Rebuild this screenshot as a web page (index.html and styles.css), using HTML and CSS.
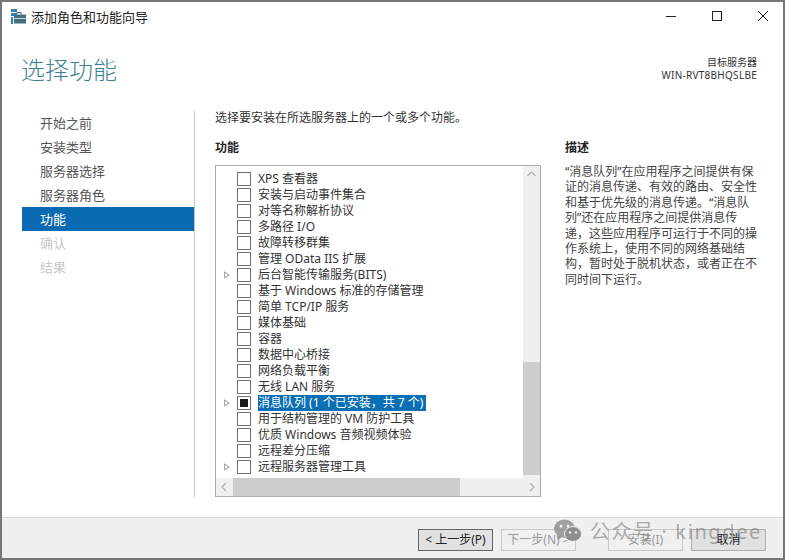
FILE: index.html
```html
<!DOCTYPE html>
<html lang="zh">
<head>
  <meta charset="utf-8">
  <title>添加角色和功能向导</title>
  <link rel="stylesheet" href="styles.css">
</head>
<body>
<div class="window">
  <header class="titlebar">
    <svg class="app-icon" width="15" height="15" viewBox="0 0 15 15">
      <rect x="0" y="0" width="6" height="3" fill="#2f86b8"/>
      <rect x="0" y="4" width="6" height="3" fill="#2f86b8"/>
      <rect x="0" y="8" width="2" height="7" fill="#2f86b8"/>
      <path d="M6 5V3.5h4V5" fill="none" stroke="#46626e" stroke-width="1"/>
      <rect x="3" y="5.5" width="12" height="9" fill="#46707f"/>
      <rect x="3" y="9" width="12" height="1" fill="#c9d8de"/>
    </svg>
    <span class="title-text">添加角色和功能向导</span>
    <div class="window-btns">
      <svg width="12" height="12" viewBox="0 0 12 12"><path d="M1 6.5h10" stroke="#222" stroke-width="1"/></svg>
      <svg width="12" height="12" viewBox="0 0 12 12"><rect x="1.5" y="1.5" width="9" height="9" fill="none" stroke="#222"/></svg>
      <svg width="12" height="12" viewBox="0 0 12 12"><path d="M1 1l10 10M11 1L1 11" stroke="#222" stroke-width="1"/></svg>
    </div>
  </header>

  <div class="page-head">
    <h1>选择功能</h1>
    <div class="server">
      <div>目标服务器</div>
      <div class="server-name">WIN-RVT8BHQSLBE</div>
    </div>
  </div>

  <div class="content">
    <nav class="steps">
      <div class="step">开始之前</div>
      <div class="step">安装类型</div>
      <div class="step">服务器选择</div>
      <div class="step">服务器角色</div>
      <div class="step active">功能</div>
      <div class="step off">确认</div>
      <div class="step off">结果</div>
    </nav>

    <main class="main">
      <p class="intro">选择要安装在所选服务器上的一个或多个功能。</p>
      <div class="columns">
        <section class="features">
          <h2>功能</h2>
          <div class="listbox">
            <div class="list-top">
              <ul class="tree">
                <li class="row"><span class="arrow"></span><span class="check"></span><span class="label">XPS 查看器</span></li>
                <li class="row"><span class="arrow"></span><span class="check"></span><span class="label">安装与启动事件集合</span></li>
                <li class="row"><span class="arrow"></span><span class="check"></span><span class="label">对等名称解析协议</span></li>
                <li class="row"><span class="arrow"></span><span class="check"></span><span class="label">多路径 I/O</span></li>
                <li class="row"><span class="arrow"></span><span class="check"></span><span class="label">故障转移群集</span></li>
                <li class="row"><span class="arrow"></span><span class="check"></span><span class="label">管理 OData IIS 扩展</span></li>
                <li class="row"><span class="arrow open"></span><span class="check"></span><span class="label">后台智能传输服务(BITS)</span></li>
                <li class="row"><span class="arrow"></span><span class="check"></span><span class="label">基于 Windows 标准的存储管理</span></li>
                <li class="row"><span class="arrow"></span><span class="check"></span><span class="label">简单 TCP/IP 服务</span></li>
                <li class="row"><span class="arrow"></span><span class="check"></span><span class="label">媒体基础</span></li>
                <li class="row"><span class="arrow"></span><span class="check"></span><span class="label">容器</span></li>
                <li class="row"><span class="arrow"></span><span class="check"></span><span class="label">数据中心桥接</span></li>
                <li class="row"><span class="arrow"></span><span class="check"></span><span class="label">网络负载平衡</span></li>
                <li class="row"><span class="arrow"></span><span class="check"></span><span class="label">无线 LAN 服务</span></li>
                <li class="row"><span class="arrow open"></span><span class="check partial"></span><span class="label selected">消息队列 (1 个已安装，共 7 个)</span></li>
                <li class="row"><span class="arrow"></span><span class="check"></span><span class="label">用于结构管理的 VM 防护工具</span></li>
                <li class="row"><span class="arrow"></span><span class="check"></span><span class="label">优质 Windows 音频视频体验</span></li>
                <li class="row"><span class="arrow"></span><span class="check"></span><span class="label">远程差分压缩</span></li>
                <li class="row"><span class="arrow open"></span><span class="check"></span><span class="label">远程服务器管理工具</span></li>
              </ul>
              <div class="vscroll">
                <svg class="sb-btn" width="17" height="17" viewBox="0 0 17 17"><path d="M4.5 10l4-4 4 4" fill="none" stroke="#b5b5b5" stroke-width="1.4"/></svg>
                <div class="vtrack"><div class="vthumb"></div></div>
                <svg class="sb-btn" width="17" height="17" viewBox="0 0 17 17"><path d="M4.5 7l4 4 4-4" fill="none" stroke="#b5b5b5" stroke-width="1.4"/></svg>
              </div>
            </div>
            <div class="hscroll">
              <svg class="sb-btn" width="17" height="18" viewBox="0 0 17 18"><path d="M10 5l-4 4 4 4" fill="none" stroke="#b5b5b5" stroke-width="1.4"/></svg>
              <div class="hthumb"></div>
              <svg class="sb-btn" width="17" height="18" viewBox="0 0 17 18"><path d="M7 5l4 4-4 4" fill="none" stroke="#b5b5b5" stroke-width="1.4"/></svg>
            </div>
          </div>
        </section>
        <aside class="desc">
          <h2>描述</h2>
          <p>“消息队列”在应用程序之间提供有保证的消息传递、有效的路由、安全性和基于优先级的消息传递。“消息队列”还在应用程序之间提供消息传递，这些应用程序可运行于不同的操作系统上，使用不同的网络基础结构，暂时处于脱机状态，或者正在不同时间下运行。</p>
        </aside>
      </div>
    </main>
  </div>

  <footer class="footer">
    <button class="btn">&lt; 上一步(P)</button>
    <button class="btn ghost">下一步(N) &gt;</button>
    <button class="btn ghost gap">安装(I)</button>
    <button class="btn">取消</button>
  </footer>

  <div class="watermark">
    <svg width="28" height="24" viewBox="0 0 28 24">
      <ellipse cx="10.5" cy="9.5" rx="10.5" ry="9" fill="#8b8b8b"/>
      <path d="M4 15l-1 6 6-3z" fill="#8b8b8b"/>
      <ellipse cx="19" cy="15" rx="8.5" ry="7.5" fill="#777" stroke="#f0f0f0" stroke-width="1"/>
      <circle cx="7" cy="7" r="1.5" fill="#f0f0f0"/>
      <circle cx="14" cy="7" r="1.5" fill="#f0f0f0"/>
      <circle cx="16" cy="13.5" r="1.2" fill="#f0f0f0"/>
      <circle cx="22" cy="13.5" r="1.2" fill="#f0f0f0"/>
    </svg>
    <span>公众号 · kingdee</span>
  </div>
</div>
</body>
</html>
```

FILE: styles.css
```css
* {
  box-sizing: border-box;
}

html, body {
  margin: 0;
  padding: 0;
}

body {
  font-family: "Noto Sans", "Noto Sans CJK SC", sans-serif;
  font-size: 12px;
  color: #333;
}

.window {
  position: relative;
  display: flex;
  flex-direction: column;
  width: 785px;
  height: 560px;
  border: 2px solid #777;
  background: #fff;
  overflow: hidden;
}

.titlebar {
  display: flex;
  align-items: center;
  height: 28px;
  padding-left: 9px;
  flex: none;
}

.app-icon {
  margin-right: 5px;
}

.title-text {
  font-size: 13px;
  color: #222;
}

.window-btns {
  display: flex;
  gap: 34px;
  margin-left: auto;
  margin-right: 14px;
}

.page-head {
  display: flex;
  justify-content: space-between;
  height: 81px;
  padding: 23px 26px 0 19px;
  flex: none;
}

h1 {
  margin: 0;
  font-size: 24px;
  font-weight: 300;
  line-height: 34px;
  color: #3d7f96;
}

.server {
  padding-top: 3px;
  text-align: right;
  font-size: 10px;
  line-height: 13px;
  color: #333;
}

.server-name {
  letter-spacing: 0.27px;
}

.content {
  display: flex;
  flex: 1;
  min-height: 0;
}

.steps {
  width: 172px;
  margin-left: 20px;
  flex: none;
}

.step {
  height: 24px;
  padding-left: 18px;
  font-size: 13px;
  line-height: 24px;
  color: #555;
}

.step.active {
  background: #0a6ab2;
  color: #fff;
}

.step.off {
  color: #c8c8c8;
}

.main {
  width: 570px;
  height: 386px;
  padding-left: 20px;
  border-left: 1px solid #c4c4c4;
}

.intro {
  margin: 0;
  height: 28px;
  line-height: 14px;
  color: #333;
}

.columns {
  display: flex;
}

h2 {
  margin: 0;
  padding-top: 1px;
  font-size: 12px;
  font-weight: 700;
  line-height: 16px;
  color: #222;
}

.features {
  width: 326px;
  flex: none;
}

.features h2 {
  height: 26px;
}

.listbox {
  height: 332px;
  border: 1px solid #acacac;
  display: flex;
  flex-direction: column;
}

.list-top {
  display: flex;
  flex: 1;
  min-height: 0;
}

.tree {
  flex: 1;
  margin: 0;
  padding: 5px 0 0;
  list-style: none;
  overflow: hidden;
}

.row {
  display: flex;
  align-items: center;
  height: 16px;
  white-space: nowrap;
}

.arrow {
  width: 21px;
  height: 9px;
  flex: none;
  position: relative;
}

.arrow.open::before {
  content: "";
  position: absolute;
  left: 8px;
  top: 0;
  border-left: 6px solid #a6a6a6;
  border-top: 4.5px solid transparent;
  border-bottom: 4.5px solid transparent;
}

.arrow.open::after {
  content: "";
  position: absolute;
  left: 9px;
  top: 2px;
  border-left: 3px solid #fff;
  border-top: 2.5px solid transparent;
  border-bottom: 2.5px solid transparent;
}

.check {
  display: flex;
  align-items: center;
  justify-content: center;
  width: 14px;
  height: 14px;
  margin-right: 7px;
  border: 1px solid #707070;
  background: #fff;
  flex: none;
}

.check.partial::before {
  content: "";
  width: 8px;
  height: 8px;
  background: #1a1a1a;
}

.label {
  line-height: 16px;
  color: #333;
}

.label.selected {
  padding-right: 3px;
  background: #0a6fb5;
  color: #fff;
}

.vscroll {
  display: flex;
  flex-direction: column;
  width: 17px;
  background: #f0f0f0;
  flex: none;
}

.sb-btn {
  display: block;
  flex: none;
}

.vtrack {
  flex: 1;
  padding-top: 179px;
}

.vthumb {
  height: 113px;
  background: #cdcdcd;
}

.hscroll {
  display: flex;
  height: 18px;
  background: #f0f0f0;
  flex: none;
  justify-content: space-between;
}

.hthumb {
  width: 227px;
  margin-right: auto;
  background: #cdcdcd;
}

.desc {
  width: 196px;
  margin-left: 24px;
  flex: none;
}

.desc h2 {
  height: 25px;
}

.desc p {
  margin: 0;
  line-height: 15.4px;
  color: #444;
}

.footer {
  display: flex;
  align-items: center;
  gap: 8px;
  height: 41px;
  padding-top: 3px;
  padding-right: 17px;
  margin-top: auto;
  justify-content: flex-end;
  background: #f0f0f0;
  border-top: 1px solid #dcdcdc;
  flex: none;
}

.btn {
  width: 75px;
  height: 22px;
  padding: 0;
  font-family: inherit;
  font-size: 12px;
  line-height: 18px;
  color: #222;
  background: #e1e1e1;
  border: 1px solid #adadad;
}

.btn:first-child {
  border-color: #666;
}

.btn.ghost {
  color: #9a9a9a;
  background: #f0f0f0;
  border-color: #c8c8c8;
}

.btn.gap {
  margin-left: 24px;
}

.watermark {
  position: absolute;
  left: 552px;
  top: 514px;
  display: flex;
  align-items: center;
  gap: 8px;
  font-size: 20px;
  letter-spacing: 1.6px;
  color: rgba(110, 110, 110, 0.55);
  white-space: nowrap;
}

.watermark svg {
  opacity: 0.8;
}
```
